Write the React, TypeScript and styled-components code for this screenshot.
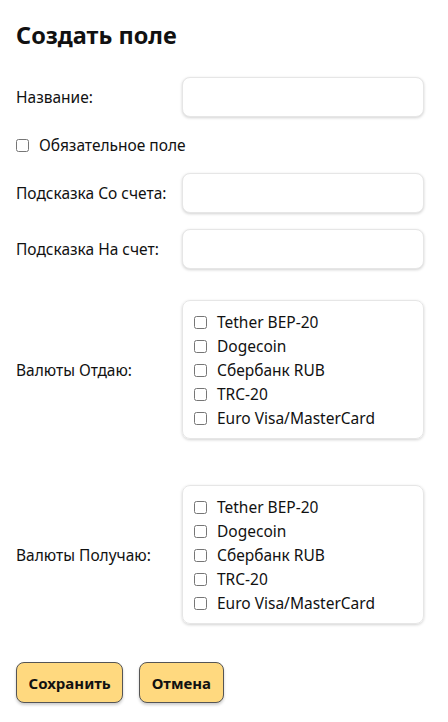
import styled, { createGlobalStyle } from 'styled-components';

const Global = createGlobalStyle`
  body {
    margin: 0;
    background: #fff;
    font-family: "Noto Sans", "Open Sans", sans-serif;
    color: #111;
  }
`;

const Page = styled.div`
  padding: 20px 16px 20px;
`;

const Title = styled.h1`
  font-size: 23.5px;
  font-weight: 700;
  margin: 0 0 27px;
  line-height: 30px;
`;

const Row = styled.div<{ $mb?: number }>`
  display: grid;
  grid-template-columns: 166px 242px;
  align-items: center;
  margin-bottom: ${({ $mb }) => $mb ?? 16}px;
`;

const Label = styled.label`
  font-size: 15.5px;
`;

const Input = styled.input`
  box-sizing: border-box;
  height: 40px;
  width: 100%;
  border: 1px solid #e6e6e6;
  border-radius: 8px;
  box-shadow: 0 1px 3px rgba(0, 0, 0, 0.18);
  background: #fff;
  outline: none;
`;

const CheckLine = styled.label<{ $mb?: number }>`
  display: flex;
  align-items: center;
  gap: 10px;
  font-size: 15.5px;
  height: 24px;
  margin-bottom: ${({ $mb }) => $mb ?? 0}px;
`;

const Box = styled.input.attrs({ type: 'checkbox' })`
  width: 13px;
  height: 13px;
  margin: 0;
`;

const Group = styled.div`
  box-sizing: border-box;
  border: 1px solid #e6e6e6;
  border-radius: 8px;
  box-shadow: 0 1px 3px rgba(0, 0, 0, 0.18);
  padding: 9px 11px 8px;
  display: flex;
  flex-direction: column;
`;

const Buttons = styled.div`
  display: flex;
  gap: 16px;
`;

const Button = styled.button`
  height: 41px;
  padding: 0 11.5px;
  background: #ffd97f;
  border: 1px solid #555;
  border-radius: 8px;
  box-shadow: 0 2px 3px rgba(0, 0, 0, 0.2);
  font-family: inherit;
  font-size: 15px;
  font-weight: 700;
  color: #111;
`;

const currencies = ['Tether BEP-20', 'Dogecoin', 'Сбербанк RUB', 'TRC-20', 'Euro Visa/MasterCard'];

function CurrencyGroup() {
  return (
    <Group>
      {currencies.map((c) => (
        <CheckLine key={c}>
          <Box />
          {c}
        </CheckLine>
      ))}
    </Group>
  );
}

export default function App() {
  return (
    <Page>
      <Global />
      <Title>Создать поле</Title>
      <Row>
        <Label>Название:</Label>
        <Input />
      </Row>
      <CheckLine $mb={16}>
        <Box />
        Обязательное поле
      </CheckLine>
      <Row>
        <Label>Подсказка Со счета:</Label>
        <Input />
      </Row>
      <Row $mb={31}>
        <Label>Подсказка На счет:</Label>
        <Input />
      </Row>
      <Row $mb={46}>
        <Label>Валюты Отдаю:</Label>
        <CurrencyGroup />
      </Row>
      <Row $mb={38}>
        <Label>Валюты Получаю:</Label>
        <CurrencyGroup />
      </Row>
      <Buttons>
        <Button>Сохранить</Button>
        <Button>Отмена</Button>
      </Buttons>
    </Page>
  );
}
